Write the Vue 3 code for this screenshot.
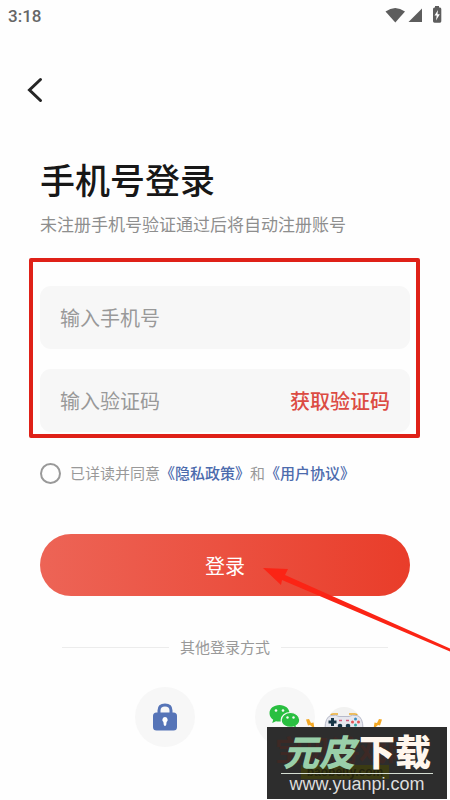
<script setup>
import { ref } from 'vue'

const phone = ref('')
const code = ref('')
const agreed = ref(false)
</script>

<template>
  <div class="page">
    <header class="status">
      <span class="time">3:18</span>
      <svg class="status-icons" width="62" height="20" viewBox="0 0 62 20" aria-hidden="true">
        <path d="M5.500 7.500Q15.300 .3 25 7.500L15.300 18.500Z" fill="#5d5d5d" />
        <path d="M42 4.500V18H28.500Z" fill="#5d5d5d" />
        <path d="M55 2H59V3.500H60Q61.300 3.500 61.300 5V17.300Q61.300 18.700 60 18.700H54.500Q53 18.700 53 17.300V5Q53 3.500 54.500 3.500H55Z" fill="#5d5d5d" />
        <path d="M58 6L54.500 11.500H56.700L56 16.500L59.800 10.300H57.500Z" fill="#fff" />
      </svg>
    </header>

    <nav class="nav">
      <button class="back" type="button" aria-label="返回">
        <svg width="18" height="28" viewBox="0 0 18 28" fill="none" stroke="#252525" stroke-width="3" stroke-linecap="round">
          <path d="M14.500 3.500L3.500 14L14.500 24.500" />
        </svg>
      </button>
    </nav>

    <main class="content">
      <h1>手机号登录</h1>
      <p class="subtitle">未注册手机号验证通过后将自动注册账号</p>

      <form @submit.prevent>
        <div class="fields">
          <div class="field">
            <input v-model="phone" type="tel" placeholder="输入手机号" aria-label="手机号" />
          </div>
          <div class="field">
            <input v-model="code" type="text" placeholder="输入验证码" aria-label="验证码" />
            <button class="get-code" type="button">获取验证码</button>
          </div>
        </div>

        <div class="agreement">
          <input id="agree" v-model="agreed" type="checkbox" />
          <span><label for="agree">已详读并同意</label><a href="#privacy">《隐私政策》</a>和<a href="#terms">《用户协议》</a></span>
        </div>

        <button class="submit" type="submit">登录</button>
      </form>

      <div class="divider">其他登录方式</div>

      <div class="methods">
        <button class="method" type="button" aria-label="密码登录">
          <svg width="24" height="28" viewBox="0 0 24 28" aria-hidden="true">
            <path d="M6 12V7.500Q6 2 12 2T18 7.500V12" fill="none" stroke="#5674b7" stroke-width="3" />
            <rect x="0" y="9.500" width="24" height="18" rx="3.500" fill="#5674b7" />
            <path d="M12 14A2.800 2.800 0 0 1 13.600 19L13.200 22Q12 24 10.800 22L10.400 19A2.800 2.800 0 0 1 12 14Z" fill="#fff" />
          </svg>
        </button>
        <button class="method" type="button" aria-label="微信登录">
          <svg width="32" height="26" viewBox="0 0 32 26" aria-hidden="true">
            <path d="M10.500 1C4.700 1 .5 4.600.5 9.200C.5 12 2 14.200 4.200 15.700L3.200 19L7 17.200C11 18.200 20.500 17 20.500 9.200C20.500 4.600 16.200 1 10.500 1Z" fill="#29bf40" />
            <path d="M21.500 8.500C16.200 8.500 12.200 11.800 12.200 16C12.200 21.500 18 24.500 24.500 23L28 25L27.200 21.800C29.500 20.500 30.800 18.500 30.800 16C30.800 11.800 26.800 8.500 21.500 8.500Z" fill="#29bf40" stroke="#f7f7f7" stroke-width="1.200" />
            <g fill="#f7f7f7">
              <circle cx="7" cy="6.500" r="1.300" /><circle cx="14" cy="6.500" r="1.300" />
              <circle cx="18.500" cy="13.500" r="1.200" /><circle cx="24.500" cy="13.500" r="1.200" />
            </g>
          </svg>
        </button>
      </div>
    </main>

    <svg class="arrow" width="188" height="90" viewBox="0 0 188 90" aria-hidden="true">
      <path d="M0 3L25 4L22 10L188 84V87L19 15L18 20Z" fill="#fb2415" />
    </svg>

    <svg class="mascot" width="78" height="30" viewBox="0 0 78 30" aria-hidden="true">
      <circle cx="39" cy="24" r="17" fill="#f2f2f1" />
      <path d="M26 15Q26 14 28 14H33M44 14H50Q52 14 52 15" fill="none" stroke="#edac2d" stroke-width="1.500" />
      <path d="M1 19.500L4 19L6 23L8.500 22.500L9.500 29L5 25L3 25.500Z" fill="#f4a926" />
      <path d="M77 19.500L74 19L72 23L69.500 22.500L68.500 29L73 25L75 25.500Z" fill="#f4a926" />
      <path d="M26 15.500Q31 14.500 34 16.500H44Q47 14.500 52 15.500Q58 17 58 29H20Q20 17 26 15.500Z" fill="#e6e7ee" stroke="#b8bbca" stroke-width="1" />
      <path d="M26 18H29V20.500H31.500V23.500H29V26H26V23.500H23.500V20.500H26Z" fill="#173546" />
      <path d="M34 20.500H37M41 20.500H44" stroke="#d55d7c" stroke-width="1.500" />
      <circle cx="35" cy="26" r="2.300" fill="#173546" />
      <circle cx="43" cy="26" r="2.300" fill="#173546" />
      <circle cx="50.500" cy="19" r="1.500" fill="#3d8fc2" />
      <circle cx="47.500" cy="22" r="1.500" fill="#e65454" />
      <circle cx="53.500" cy="22" r="1.500" fill="#e65454" />
      <circle cx="50.500" cy="25" r="1.500" fill="#31a6a1" />
    </svg>

    <aside class="watermark">
      <div class="ghost" aria-hidden="true">
        <span class="ghost-name">宝贝游戏网</span>
        <span class="ghost-url">baobeity.com</span>
      </div>
      <strong class="brand"><em>元皮</em><span>下载</span></strong>
      <span class="site">www.yuanpi.com</span>
    </aside>
  </div>
</template>

<style>
body {
  margin: 0;
  background: #fefefe;
}
</style>

<style scoped>
.page {
  position: relative;
  box-sizing: border-box;
  min-height: 100vh;
  overflow: hidden;
  color: #999;
  background: #fefefe;
  font-family: "Noto Sans CJK SC", sans-serif;
}
button,
input {
  font-family: inherit;
}
button {
  padding: 0;
  border: 0;
  background: none;
  cursor: pointer;
}
.status {
  display: flex;
  align-items: center;
  justify-content: space-between;
  height: 32px;
  padding: 0 8px;
}
.time {
  color: #666;
  font: 500 17px/20px Roboto, sans-serif;
}
.status-icons {
  margin-bottom: 4px;
}
.nav {
  display: flex;
  padding: 44px 26px 0;
}
.back {
  display: flex;
}
.content {
  padding: 52px 40px 0;
}
h1 {
  margin: 0;
  color: #171717;
  font-size: 35px;
  font-weight: 500;
  line-height: 46px;
}
.subtitle {
  margin: 10px 0 0;
  color: #8e8e8e;
  font-size: 17px;
  line-height: 24px;
}
.fields {
  position: relative;
  display: flex;
  flex-direction: column;
  gap: 20px;
  margin-top: 50px;
}
.fields::after {
  content: "";
  position: absolute;
  inset: -28px -10px -6px -11px;
  border: 4px solid #df2118;
  border-radius: 2px;
  box-sizing: border-box;
  pointer-events: none;
}
.field {
  display: flex;
  align-items: center;
  height: 63px;
  padding: 0 20px;
  border-radius: 11px;
  background: #f7f7f7;
}
.field input {
  flex: 1;
  min-width: 0;
  padding: 0;
  border: 0;
  outline: 0;
  color: #333;
  background: transparent;
  font-size: 20px;
  line-height: 30px;
}
.field input::placeholder {
  color: #999;
  opacity: 1;
}
.get-code {
  color: #dc4b43;
  font-size: 20px;
  font-weight: 500;
  line-height: 30px;
}
.agreement {
  display: flex;
  align-items: center;
  gap: 9px;
  margin-top: 30px;
  font-size: 15px;
  line-height: 22px;
}
.agreement input {
  appearance: none;
  width: 21px;
  height: 21px;
  margin: 0;
  border: 2px solid #999;
  border-radius: 50%;
}
.agreement input:checked {
  background: #e9402d;
}
.agreement a {
  color: #4c6bad;
  font-weight: 500;
  text-decoration: none;
}
.submit {
  display: block;
  width: 100%;
  height: 62px;
  margin-top: 50px;
  border-radius: 31px;
  color: #fff;
  background: linear-gradient(90deg, #ed6456, #e93d2a);
  font-size: 20px;
}
.divider {
  display: flex;
  align-items: center;
  gap: 11px;
  margin-top: 40px;
  padding: 0 22px;
  font-size: 15px;
  line-height: 22px;
}
.divider::before,
.divider::after {
  content: "";
  flex: 1;
  height: 1px;
  background: #ececec;
}
.methods {
  display: flex;
  justify-content: center;
  gap: 60px;
  margin-top: 29px;
}
.method {
  display: grid;
  place-items: center;
  width: 60px;
  height: 60px;
  border-radius: 50%;
  background: #f7f7f7;
}
.arrow {
  position: absolute;
  top: 565px;
  right: -1px;
}
.mascot {
  position: absolute;
  right: 67px;
  bottom: 70px;
}
.watermark {
  position: absolute;
  right: 3px;
  bottom: 1px;
  display: flex;
  flex-direction: column;
  align-items: center;
  box-sizing: border-box;
  width: 180px;
  height: 72px;
  background: #2d2d2d;
}
.ghost {
  position: absolute;
  inset: 6px 32px 0 8px;
  display: flex;
  flex-direction: column;
  align-items: center;
}
.ghost-name {
  color: #3d2925;
  font-size: 28px;
  font-weight: 700;
  line-height: 32px;
}
.ghost-url {
  padding: 0 6px;
  color: #24240f;
  background: #3b3b13;
  font: 700 12px/14px "Liberation Sans", sans-serif;
}
.brand {
  position: relative;
  display: flex;
  justify-content: center;
  gap: 4px;
  width: 152px;
  border-bottom: 1px solid #d5ded3;
  font-size: 36px;
  font-weight: 900;
  line-height: 46px;
  white-space: nowrap;
}
.brand em {
  color: #99cfa9;
}
.brand span {
  color: #fff7ee;
}
.site {
  position: relative;
  color: #ddd;
  font: 18px/20px "Liberation Sans", sans-serif;
}
</style>
